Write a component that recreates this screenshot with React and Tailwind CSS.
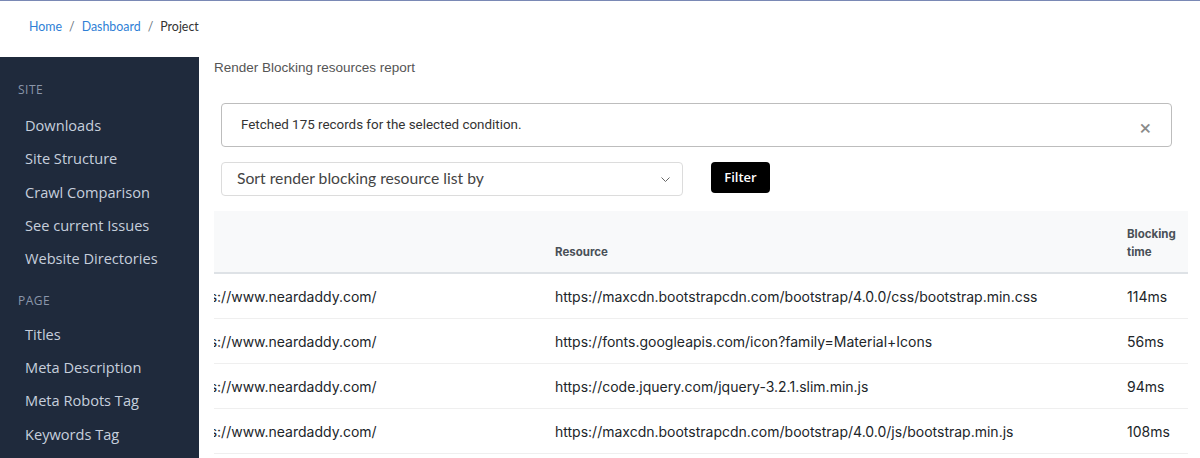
const siteLinks = ['Downloads', 'Site Structure', 'Crawl Comparison', 'See current Issues', 'Website Directories'];
const pageLinks = ['Titles', 'Meta Description', 'Meta Robots Tag', 'Keywords Tag'];

const rows = [
	{ page: 'https://www.neardaddy.com/', resource: 'https://maxcdn.bootstrapcdn.com/bootstrap/4.0.0/css/bootstrap.min.css', time: '114ms' },
	{ page: 'https://www.neardaddy.com/', resource: 'https://fonts.googleapis.com/icon?family=Material+Icons', time: '56ms' },
	{ page: 'https://www.neardaddy.com/', resource: 'https://code.jquery.com/jquery-3.2.1.slim.min.js', time: '94ms' },
	{ page: 'https://www.neardaddy.com/', resource: 'https://maxcdn.bootstrapcdn.com/bootstrap/4.0.0/js/bootstrap.min.js', time: '108ms' },
];

function SidebarSection({ label, links, first }) {
	return (
		<div className={first ? '' : 'mt-[15px]'}>
			<p className={`${first ? 'mb-[9px]' : 'mb-[7px]'} h-[20px] pl-[18px] text-[12px] uppercase leading-[20px] tracking-[0.04em] text-[#8a96aa] [font-family:'Open_Sans',sans-serif]`}>
				{label}
			</p>
			<ul>
				{links.map((link) => (
					<li key={link} className="flex h-[33.4px] items-center pl-[25px] text-[14.6px] text-[#c6cfdc] [font-family:'Open_Sans',sans-serif]">
						{link}
					</li>
				))}
			</ul>
		</div>
	);
}

export default function App() {
	return (
		<div className="min-h-screen overflow-hidden bg-white">
			<div className="h-px bg-[#7a89b5]" />
			<nav className="flex h-[56px] items-center pb-[4px] pl-[29px] text-[12.4px] [font-family:Lato,sans-serif]">
				<a className="text-[#2f7fd6]">Home</a>
				<span className="mx-[7px] text-[#6c757d]">/</span>
				<a className="text-[#2f7fd6]">Dashboard</a>
				<span className="mx-[7px] text-[#6c757d]">/</span>
				<span className="text-[#333]">Project</span>
			</nav>

			<div className="flex">
				<aside className="h-[401px] w-[199px] shrink-0 bg-[#1f2a3c] pt-[23px]">
					<SidebarSection label="Site" links={siteLinks} first />
					<SidebarSection label="Page" links={pageLinks} />
				</aside>

				<main className="min-w-0 flex-1 pl-[15px] pr-[12px] pt-px">
					<h1 className="text-[13.5px] leading-[20px] text-[#555] [font-family:'Liberation_Sans',sans-serif]">
						Render Blocking resources report
					</h1>

					<div className="ml-[7px] mr-[16px] mt-[25px] flex h-[44px] items-center justify-between rounded-[4px] border border-[#bdbdbd] pl-[19px] pr-[20px] [font-family:Roboto,sans-serif]">
						<p className="text-[13.4px] text-[#333]">Fetched 175 records for the selected condition.</p>
						<span className="pt-[7px] text-[21px] leading-none text-[#8a8a8a]">×</span>
					</div>

					<div className="ml-[7px] mt-[15px] flex items-start gap-[28px]">
						<div className="flex h-[34px] w-[462px] items-center justify-between rounded-[4px] border border-[#dcdcdc] pl-[15px] pr-[12px] [font-family:Lato,sans-serif]">
							<span className="text-[15.7px] text-[#444]">Sort render blocking resource list by</span>
							<svg width="9" height="5" viewBox="0 0 9 5" fill="none" stroke="#666" strokeWidth="1">
								<path d="M0.5 0.5l4 4 4-4" />
							</svg>
						</div>
						<button className="h-[31px] w-[59px] rounded-[4px] bg-black text-[13px] font-semibold text-white [font-family:'Open_Sans',sans-serif]" type="button">
							Filter
						</button>
					</div>

					<div className="mt-[15px] overflow-hidden [font-family:Inter,sans-serif]">
						<div className="-ml-[30px] grid grid-cols-[371px_572px_61px]">
							<div className="h-[63px] border-b-2 border-[#dee2e6] bg-[#f8f9fa]" />
							<div className="flex h-[63px] items-end border-b-2 border-[#dee2e6] bg-[#f8f9fa] pb-[11px] text-[11.5px] font-bold leading-[18px] text-[#495057]">
								Resource
							</div>
							<div className="flex h-[63px] items-end border-b-2 border-[#dee2e6] bg-[#f8f9fa] pb-[11px] text-[11.5px] font-bold leading-[18px] text-[#495057]">
								Blocking
								<br />
								time
							</div>

							{rows.map((row, i) => (
								<div key={i} className="contents text-[14px] text-[#212529]">
									<div className="flex h-[45px] items-center whitespace-nowrap border-b border-[#efefef]">{row.page}</div>
									<div className="flex h-[45px] items-center whitespace-nowrap border-b border-[#efefef]">{row.resource}</div>
									<div className="flex h-[45px] items-center whitespace-nowrap border-b border-[#efefef]">{row.time}</div>
								</div>
							))}
						</div>
					</div>
				</main>
			</div>
		</div>
	);
}
